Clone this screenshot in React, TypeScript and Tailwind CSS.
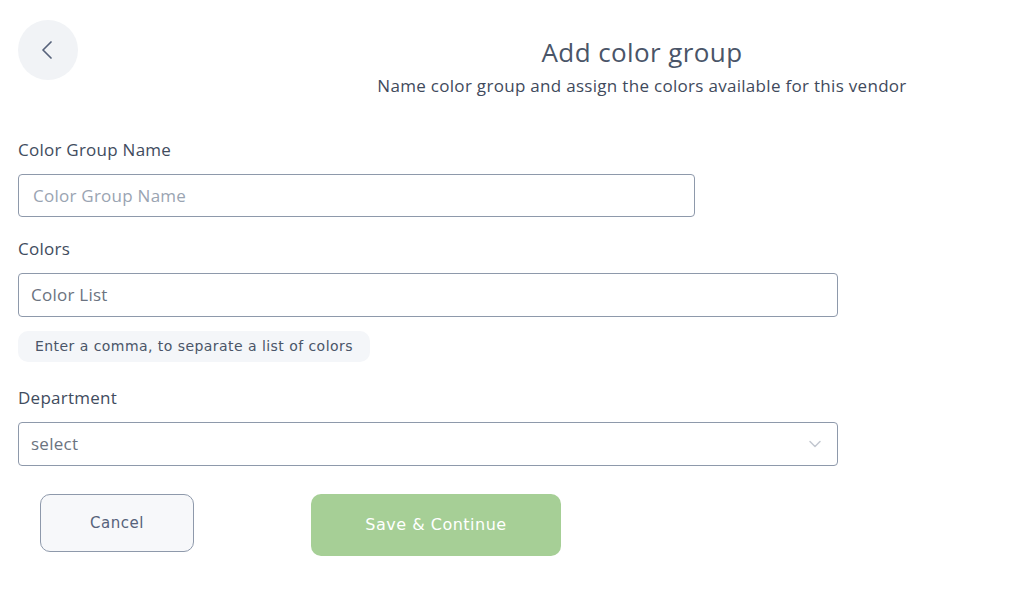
import { ChevronLeft, ChevronDown } from "lucide-react";

export default function App() {
  return (
    <div className="min-h-screen bg-white px-[18px] pt-5 font-['Open_Sans',sans-serif] text-[#4a5568]">
      {/* header */}
      <div className="flex items-start">
        <button className="w-[60px] h-[60px] rounded-full bg-[#f1f3f6] flex items-center justify-center shrink-0">
          <ChevronLeft size={32} strokeWidth={1.3} className="text-[#56627a] -ml-0.5" />
        </button>
        <div className="flex-1 pl-[200px] pt-4 text-center">
          <h1 className="text-[26px] leading-8 tracking-[0.4px] text-[#4a5568]">Add color group</h1>
          <p className="mt-1.5 text-[17px] leading-6 tracking-[0.3px] text-[#3f4a5c]">
            Name color group and assign the colors available for this vendor
          </p>
        </div>
      </div>

      {/* form */}
      <div className="mt-10 flex flex-col">
        <label className="text-[17px] leading-6 tracking-[0.25px] text-[#414c5e]">Color Group Name</label>
        <input
          placeholder="Color Group Name"
          className="mt-3 w-[677px] h-[43px] border border-[#8e99ab] rounded-[4px] pl-[14px] text-[17px] tracking-[0.25px] outline-none placeholder:text-[#9aa4b2]"
        />

        <label className="mt-5 text-[17px] leading-6 tracking-[0.25px] text-[#414c5e]">Colors</label>
        <div className="mt-3 w-[820px] h-[44px] border border-[#8e99ab] rounded-[4px] pl-3 flex items-center text-[17px] tracking-[0.25px] text-[#6b7380]">
          Color List
        </div>
        <div className="mt-[14px] self-start h-[31px] px-[17px] rounded-[10px] bg-[#f4f6f9] flex items-center font-['DejaVu_Sans',sans-serif] text-[14px] tracking-[0.45px] text-[#4a5568]">
          Enter a comma, to separate a list of colors
        </div>

        <label className="mt-6 text-[17px] leading-6 tracking-[0.25px] text-[#414c5e]">Department</label>
        <div className="mt-3 w-[820px] h-[44px] border border-[#8e99ab] rounded-[4px] pl-3 pr-3 flex items-center justify-between text-[17px] tracking-[0.25px] text-[#6b7380]">
          <span>select</span>
          <ChevronDown size={20} strokeWidth={1.8} className="text-[#c3c8d0]" />
        </div>

        <div className="mt-7 flex items-start">
          <button className="ml-[22px] w-[154px] h-[58px] rounded-[10px] border border-[#8e99ab] bg-[#f7f8fa] font-['DejaVu_Sans',sans-serif] text-[15px] tracking-[0.5px] text-[#56627a]">
            Cancel
          </button>
          <button className="ml-[117px] w-[250px] h-[62px] rounded-[10px] bg-[#a6cf96] font-['DejaVu_Sans',sans-serif] text-[16px] tracking-[0.5px] text-white">
            Save &amp; Continue
          </button>
        </div>
      </div>
    </div>
  );
}
